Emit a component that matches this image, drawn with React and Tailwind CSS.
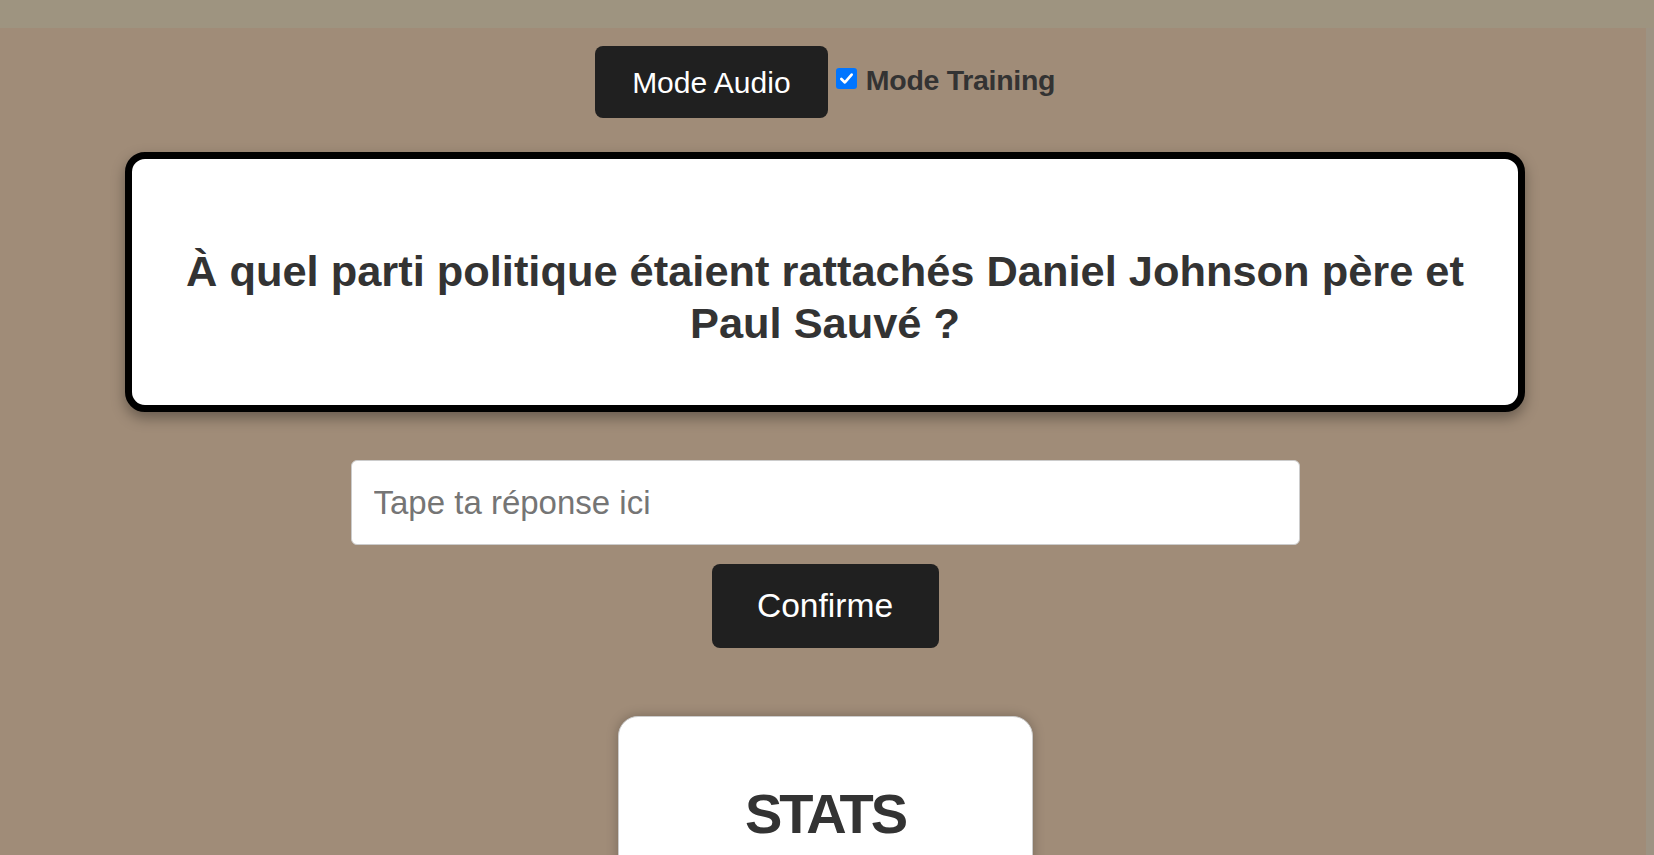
import React from "react";

export default function App() {
  return (
    <div className="min-h-screen w-full bg-[#a08c78] overflow-hidden">
      <div className="h-[28px] w-full bg-[#9e9480]" />
      <div className="flex w-full">
        <main className="flex-1 pl-[4px] flex flex-col items-center pt-[18px] pb-[40px]">
          <div className="flex items-center">
            <button className="h-[72px] w-[233px] rounded-[8px] bg-[#202020] text-white text-[30px] font-['Liberation_Sans',Arial,sans-serif]">
              Mode Audio
            </button>
            <label className="ml-[8px] mt-[-8px] flex items-center">
              <span className="flex h-[21px] w-[21px] items-center justify-center rounded-[3px] bg-[#0075ff]">
                <svg width="15" height="15" viewBox="0 0 16 16">
                  <path d="M2.5 8.5 L6.3 12.2 L13.5 3.8" fill="none" stroke="white" strokeWidth="2.8" strokeLinecap="round" strokeLinejoin="round" />
                </svg>
              </span>
              <span className="ml-[9px] mt-[5px] text-[28.5px] font-bold text-[#333333] font-['Liberation_Sans',Arial,sans-serif] tracking-[-0.3px]">
                Mode Training
              </span>
            </label>
          </div>

          <div className="mt-[34px] w-[1400px] rounded-[20px] border-[7px] border-black bg-white px-[50px] pt-[86px] pb-[56px] shadow-[0_6px_14px_rgba(0,0,0,0.35)]">
            <h1 className="text-center text-[43.4px] leading-[52px] font-bold text-[#333333] font-['Liberation_Sans',Arial,sans-serif]">
              À quel parti politique étaient rattachés Daniel Johnson père et Paul Sauvé ?
            </h1>
          </div>

          <input
            type="text"
            placeholder="Tape ta réponse ici"
            className="mt-[48px] h-[85px] w-[949px] rounded-[6px] border border-[#cccccc] bg-white px-[22px] text-[33px] text-[#333] placeholder:text-[#757575] font-['Liberation_Sans',Arial,sans-serif] outline-none"
          />

          <button className="mt-[19px] h-[84px] w-[227px] rounded-[8px] bg-[#202020] text-white text-[33.6px] font-['Liberation_Sans',Arial,sans-serif]">
            Confirme
          </button>

          <div className="mt-[68px] w-[415px] h-[300px] rounded-[20px] border border-[#cccccc] bg-white pt-[65px] shadow-[0_0_12px_rgba(0,0,0,0.25)]">
            <h2 className="text-center text-[56px] leading-[64px] font-bold tracking-[-3px] text-[#333333] font-['Liberation_Sans',Arial,sans-serif]">
              STATS
            </h2>
          </div>
        </main>
        <div className="w-[8px] bg-[#9d9383]" />
      </div>
    </div>
  );
}
